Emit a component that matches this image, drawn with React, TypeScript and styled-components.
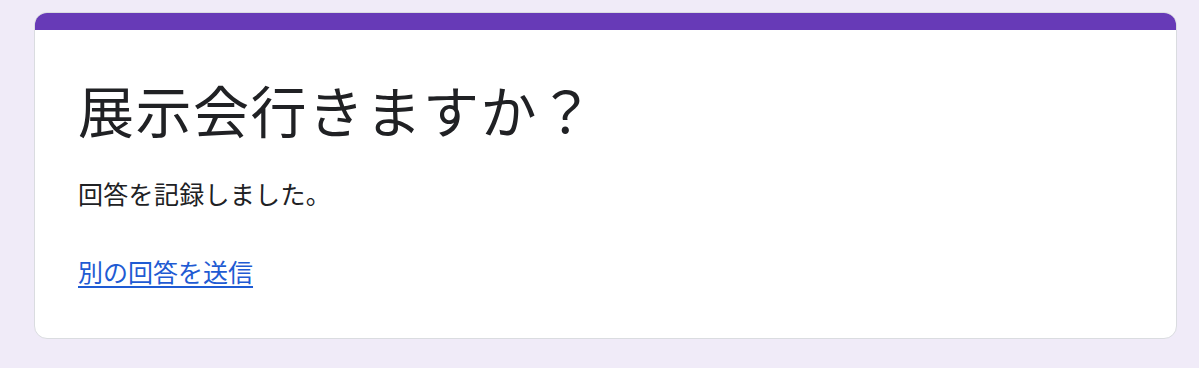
import React from 'react';
import styled, { createGlobalStyle } from 'styled-components';

const GlobalStyle = createGlobalStyle`
	html, body {
		margin: 0;
		padding: 0;
		background: #f0ebf8;
	}
	body {
		font-family: "Noto Sans CJK JP", "Noto Sans", Roboto, sans-serif;
		color: #202124;
	}
`;

const Page = styled.main`
	padding: 12px 22px 30px 34px;
	min-height: 368px;
	box-sizing: border-box;
`;

const Card = styled.section`
	background: #ffffff;
	border: 1px solid #dadce0;
	border-radius: 13px;
	overflow: hidden;
	display: flex;
	flex-direction: column;
`;

const TopBar = styled.div`
	height: 18px;
	background: #673ab7;
	margin: -1px -1px 0;
`;

const Content = styled.div`
	padding: 46px 43px 48px 43px;
	display: flex;
	flex-direction: column;
`;

const Title = styled.h1`
	margin: 0;
	font-size: 56px;
	font-weight: 400;
	line-height: 66px;
	letter-spacing: 1.5px;
`;

const Message = styled.p`
	margin: 33px 0 0;
	font-size: 25px;
	line-height: 37px;
	font-weight: 400;
	letter-spacing: 0.3px;
`;

const Link = styled.a`
	margin-top: 41px;
	align-self: flex-start;
	font-size: 25px;
	line-height: 37px;
	color: #1f5bd3;
	text-decoration: underline;
	text-underline-offset: 4px;
	text-decoration-thickness: 2px;
	cursor: pointer;
`;

const App = () => {
	return (
		<>
			<GlobalStyle />
			<Page>
				<Card>
					<TopBar />
					<Content>
						<Title>展示会行きますか？</Title>
						<Message>回答を記録しました。</Message>
						<Link href="#">別の回答を送信</Link>
					</Content>
				</Card>
			</Page>
		</>
	);
};

export default App;
